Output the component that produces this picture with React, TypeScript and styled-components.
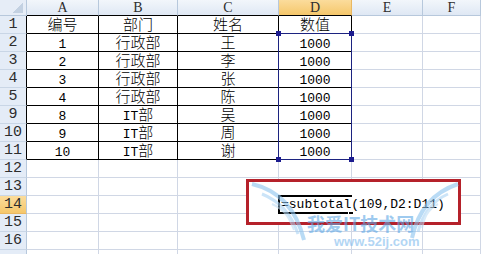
import { Fragment } from "react";
import styled, { createGlobalStyle } from "styled-components";

const GlobalStyle = createGlobalStyle`
  html, body {
    margin: 0;
    padding: 0;
    background: #fff;
    overflow: hidden;
  }
`;

const GRID = "#d0d7e5";
const HEAD_LINE = "#b7c8dc";

const Sheet = styled.div`
  position: relative;
  width: 481px;
  height: 254px;
  overflow: hidden;
  font-family: "Liberation Mono", "Noto Sans CJK SC", monospace;
  color: #000;
`;

const Grid = styled.div`
  display: grid;
  grid-template-columns: 27px 72px 79px 101px 73px 71px 1fr;
  grid-template-rows: 16px repeat(14, 18px);
  width: 100%;
  height: 100%;
`;

const OverlayGrid = styled(Grid)`
  position: absolute;
  inset: 0;
  pointer-events: none;
  z-index: 3;
`;

const Corner = styled.div`
  position: relative;
  background: #e6edf7;
  border-right: 1px solid ${HEAD_LINE};
  border-bottom: 1px solid ${HEAD_LINE};
  box-sizing: border-box;

  &::after {
    content: "";
    position: absolute;
    right: 3px;
    bottom: 2px;
    width: 10px;
    height: 10px;
    background: linear-gradient(135deg, transparent 50%, #c3d1e2 50%);
  }
`;

const ColHead = styled.div<{ $active?: boolean; $black?: boolean }>`
  display: flex;
  align-items: center;
  justify-content: center;
  box-sizing: border-box;
  font-family: "Liberation Serif", serif;
  font-size: 14px;
  color: #2d2d2d;
  padding-top: 1px;
  background: ${(p) =>
    p.$active
      ? "linear-gradient(#fbdc9c, #f5c76b)"
      : "linear-gradient(#f2f6fb, #dfe8f4)"};
  border-right: 1px solid ${(p) => (p.$active ? "#e9b862" : HEAD_LINE)};
  border-bottom: 1px solid ${(p) => (p.$black ? "#000" : HEAD_LINE)};
`;

const RowHead = styled.div<{ $active?: boolean; $black?: boolean }>`
  display: flex;
  align-items: center;
  justify-content: center;
  box-sizing: border-box;
  font-family: "Liberation Mono", monospace;
  font-size: 15px;
  color: #2d2d2d;
  background: ${(p) =>
    p.$active ? "linear-gradient(#fbdc9c, #f5c76b)" : "#e4ecf7"};
  border-right: 1px solid ${(p) => (p.$black ? "#000" : HEAD_LINE)};
  border-bottom: 1px solid ${(p) => (p.$active ? "#e9b862" : "#c9d6e6")};
`;

const Cell = styled.div<{ $black?: boolean }>`
  box-sizing: border-box;
  padding-top: 4px;
  font-size: 13px;
  line-height: 13px;
  text-align: center;
  white-space: nowrap;
  overflow: visible;
  border-right: 1px solid ${(p) => (p.$black ? "#000" : GRID)};
  border-bottom: 1px solid ${(p) => (p.$black ? "#000" : GRID)};
`;

// line-height tuned so CJK runs share the latin baseline without growing the line
const Han = styled.span`
  font-family: "Noto Sans CJK SC", sans-serif;
  font-size: 15px;
  font-weight: 300;
  line-height: 6px;
`;

const RangeBox = styled.div`
  grid-column: 5;
  grid-row: 3 / 10;
  position: relative;
  margin: -1px 0 0 -1px;
  border: 1px solid #1c2380;
`;

const Handle = styled.span<{ $x: "left" | "right"; $y: "top" | "bottom" }>`
  position: absolute;
  width: 5px;
  height: 5px;
  background: #1c1c8f;
  ${(p) => p.$x}: -3px;
  ${(p) => p.$y}: -3px;
`;

const Editor = styled.div`
  grid-column: 5;
  grid-row: 12;
  position: relative;
  margin: -1px 0 0 -1px;
  border: 2px solid #000;
  border-right: none;
  display: flex;
  align-items: center;
`;

const EditText = styled.span`
  position: relative;
  background: #fff;
  padding-left: 1px;
  font-size: 13px;
  white-space: nowrap;
  z-index: 1;
`;

const FillHandle = styled.span`
  position: absolute;
  right: -2px;
  bottom: -3px;
  width: 4px;
  height: 4px;
  background: #000;
  border: 1px solid #fff;
`;

const RedFrame = styled.div`
  position: absolute;
  left: 246px;
  top: 179px;
  width: 215px;
  height: 46px;
  box-sizing: border-box;
  border: 3px solid #b5212a;
  background: #fff;
  z-index: 2;
`;

const Watermark = styled.div`
  position: absolute;
  left: 250px;
  top: 180px;
  width: 210px;
  height: 74px;
  pointer-events: none;
  z-index: 5;
  opacity: 0.6;
`;

const MarkTitle = styled.div`
  position: absolute;
  left: 57px;
  top: 33px;
  font-family: "Noto Sans CJK SC", sans-serif;
  font-weight: 700;
  font-size: 18px;
  line-height: 20px;
  color: #5ea8e6;
  white-space: nowrap;
`;

const MarkUrl = styled.div`
  position: absolute;
  left: 84px;
  top: 55px;
  font-family: "Liberation Sans", sans-serif;
  font-weight: 700;
  font-size: 13px;
  line-height: 14px;
  color: #7fbbee;
  white-space: nowrap;
`;

const WingSvg = styled.svg`
  position: absolute;
  left: 0;
  top: 0;
`;

type Row = { n: string; cells: string[]; table?: boolean; active?: boolean };

const rows: Row[] = [
  { n: "1", cells: ["编号", "部门", "姓名", "数值"], table: true },
  { n: "2", cells: ["1", "行政部", "王", "1000"], table: true },
  { n: "3", cells: ["2", "行政部", "李", "1000"], table: true },
  { n: "4", cells: ["3", "行政部", "张", "1000"], table: true },
  { n: "5", cells: ["4", "行政部", "陈", "1000"], table: true },
  { n: "9", cells: ["8", "IT部", "吴", "1000"], table: true },
  { n: "10", cells: ["9", "IT部", "周", "1000"], table: true },
  { n: "11", cells: ["10", "IT部", "谢", "1000"], table: true },
  { n: "12", cells: [] },
  { n: "13", cells: [] },
  { n: "14", cells: [], active: true },
  { n: "15", cells: [] },
  { n: "16", cells: [] },
  { n: "", cells: [] },
];

const columns = ["A", "B", "C", "D", "E", "F"];

// CJK runs get their own font and size; latin stays monospace
const renderText = (text: string) =>
  text
    .split(/([\u4e00-\u9fff]+)/)
    .filter(Boolean)
    .map((part, i) =>
      /[\u4e00-\u9fff]/.test(part) ? <Han key={i}>{part}</Han> : <span key={i}>{part}</span>
    );

export default function App() {
  return (
    <>
      <GlobalStyle />
      <Sheet>
        <Grid>
          <Corner />
          {columns.map((c, i) => (
            <ColHead key={c} $active={c === "D"} $black={i < 4}>
              {c}
            </ColHead>
          ))}
          {rows.map((row, r) => (
            <Fragment key={r}>
              <RowHead $active={row.active} $black={row.table}>
                {row.n}
              </RowHead>
              {columns.map((c, i) => (
                <Cell key={c} $black={row.table && i < 4}>
                  {row.cells[i] ? renderText(row.cells[i]) : null}
                </Cell>
              ))}
            </Fragment>
          ))}
        </Grid>

        <RedFrame />

        <OverlayGrid>
          <RangeBox>
            <Handle $x="left" $y="top" />
            <Handle $x="right" $y="top" />
            <Handle $x="left" $y="bottom" />
            <Handle $x="right" $y="bottom" />
          </RangeBox>
          <Editor>
            <EditText>=subtotal(109,D2:D11)</EditText>
            <FillHandle />
          </Editor>
        </OverlayGrid>

        <Watermark>
          <WingSvg width="210" height="74" viewBox="0 0 210 74">
            <path d="M2 4 C28 10 46 28 54 60" stroke="#8cc4f0" strokeWidth="4" fill="none" />
            <path d="M12 14 C32 22 42 36 48 54" stroke="#a9d3f4" strokeWidth="3" fill="none" />
            <path d="M22 24 C36 30 40 40 44 50" stroke="#bfdef6" strokeWidth="2" fill="none" />
            <path d="M208 4 C184 12 168 30 162 58" stroke="#8cc4f0" strokeWidth="4" fill="none" />
            <path d="M198 14 C180 22 172 36 168 52" stroke="#a9d3f4" strokeWidth="3" fill="none" />
            <path d="M188 24 C176 30 174 40 172 48" stroke="#bfdef6" strokeWidth="2" fill="none" />
          </WingSvg>
          <MarkTitle>我爱IT技术网</MarkTitle>
          <MarkUrl>www.52ij.com</MarkUrl>
        </Watermark>
      </Sheet>
    </>
  );
}
